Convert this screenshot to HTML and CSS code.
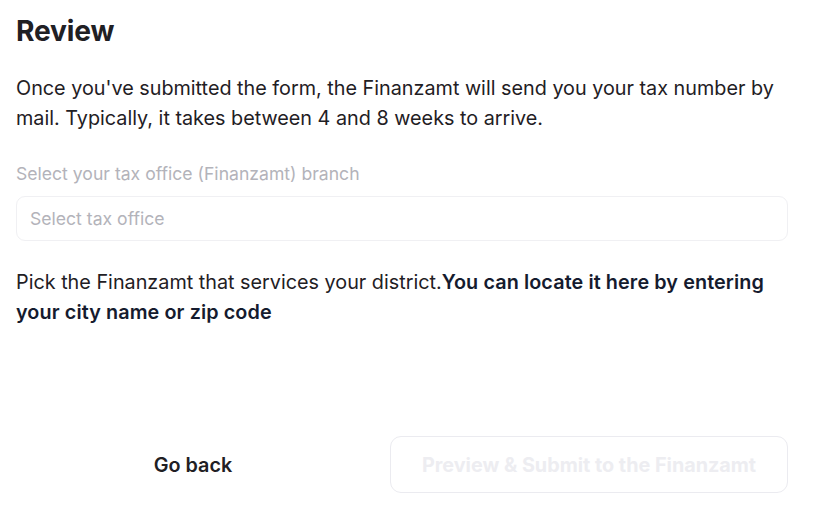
FILE: index.html
```html
<!DOCTYPE html>
<html lang="en">
<head>
<meta charset="utf-8">
<link rel="stylesheet" href="styles.css">
</head>
<body>
<main class="page">
  <h1 class="title">Review</h1>
  <p class="intro">Once you've submitted the form, the Finanzamt will send you your tax number by mail. Typically, it takes between 4 and 8 weeks to arrive.</p>
  <div class="field">
    <label class="label">Select your tax office (Finanzamt) branch</label>
    <div class="select">Select tax office</div>
  </div>
  <p class="hint">Pick the Finanzamt that services your district.<strong class="hint-strong">You can locate it here by entering your city name or zip code</strong></p>
  <div class="actions">
    <button class="btn-back">Go back</button>
    <button class="btn-submit" disabled>Preview &amp; Submit to the Finanzamt</button>
  </div>
</main>
</body>
</html>
```
FILE: styles.css
```css
* { box-sizing: border-box; }
html, body { margin: 0; padding: 0; background: #fff; }
body { font-family: Inter, "Noto Sans", sans-serif; color: #1f2024; }
.page { width: 772px; margin-left: 16px; padding-top: 13px; }
.title { font-size: 28.2px; font-weight: 700; line-height: 36px; margin: 0; color: #1f2024; letter-spacing: -0.2px; }
.intro { font-size: 19.8px; line-height: 30px; margin: 24px 0 0; color: #1f2024; }
.field { margin-top: 30px; }
.label { display: block; font-size: 17.6px; line-height: 22px; color: #b3b3ba; }
.select { margin-top: 11px; height: 45px; border: 1px solid #f0f0f3; border-radius: 9px; padding: 0 13px; display: flex; align-items: center; font-size: 17.6px; color: #b3b3ba; }
.hint { font-size: 19.8px; line-height: 30px; margin: 26px 0 0; color: #1f2024; }
.hint-strong { font-weight: 600; color: #151b2e; letter-spacing: 0.1px; }
.actions { margin-top: 109px; display: flex; gap: 20px; }
.btn-back { width: 354px; height: 57px; padding: 0; border: none; background: transparent; font-family: inherit; font-size: 19.8px; font-weight: 600; color: #1f2024; }
.btn-submit { width: 398px; height: 57px; padding: 0; border: 1px solid #ebebf0; border-radius: 11px; background: #fff; font-family: inherit; font-size: 19.8px; font-weight: 700; color: #ededf1; }
```
